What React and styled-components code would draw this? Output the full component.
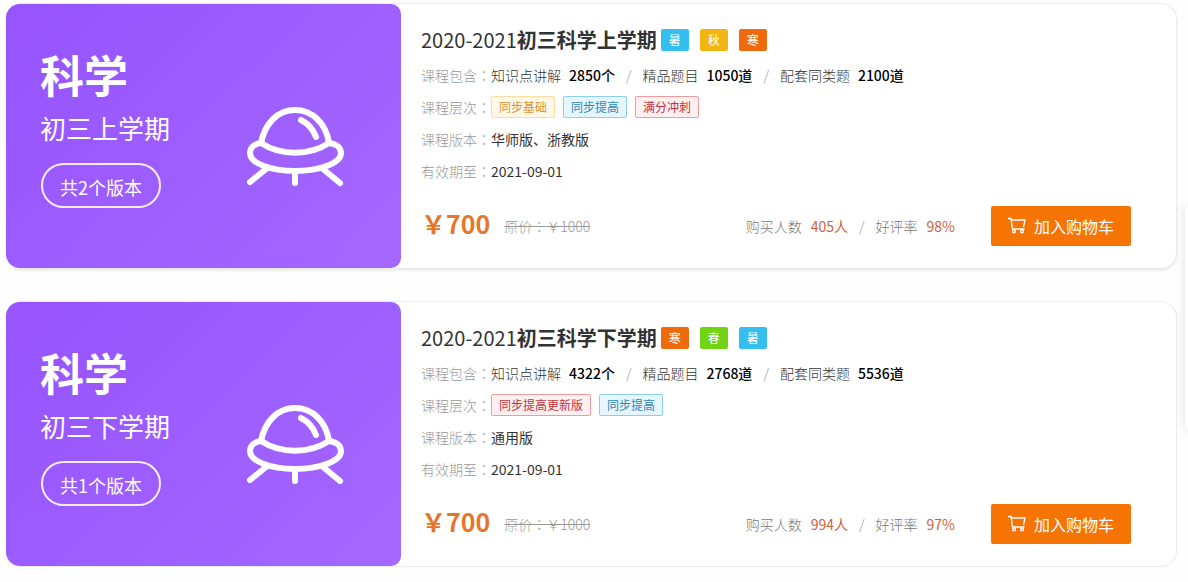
import React from 'react';
import styled, { createGlobalStyle } from 'styled-components';

const GlobalStyle = createGlobalStyle`
  * { box-sizing: border-box; }
  body {
    margin: 0;
    background: #fefefe;
    color: #333;
    font-family: 'Noto Sans CJK SC', 'Open Sans', sans-serif;
    font-size: 14px;
    overflow-x: hidden;
  }
  h2, h3, p, dl, dd, dt { margin: 0; }
`;

const CourseList = styled.main`
  display: flex;
  flex-direction: column;
  gap: 32px;
  padding: 3px 11px 15px 6px;
`;

const Card = styled.article`
  display: flex;
  background: #fff;
  border: 1px solid #ebebeb;
  border-left: 0;
  border-radius: 16px;
  box-shadow: ${p => (p.$raised ? '0 2px 3px rgba(0, 0, 0, 0.08)' : 'none')};
`;

const Cover = styled.section`
  display: flex;
  justify-content: space-between;
  align-items: flex-start;
  flex: 0 0 395px;
  padding: 40px 56px 60px 34px;
  border-radius: 14px 10px 10px 14px;
  background: linear-gradient(135deg, #9653ff, #a468ff);
  color: #fff;
`;

const Subject = styled.h2`
  font-size: 44px;
  line-height: 60px;
  font-weight: 700;
`;

const Term = styled.p`
  margin: 4px 0 15px;
  font-size: 26px;
  line-height: 40px;
  font-weight: 400;
`;

const Versions = styled.span`
  display: inline-flex;
  align-items: center;
  height: 45px;
  padding: 2px 17px 0;
  margin-left: 1px;
  border: 2px solid #f6ecff;
  border-radius: 23px;
  font-size: 18px;
  font-weight: 400;
`;

const Ufo = styled.svg`
  width: 98px;
  height: 82px;
  margin-top: 63px;
  fill: none;
  stroke: #fff;
  stroke-width: 6;
  stroke-linecap: round;
  stroke-linejoin: round;
`;

const Body = styled.section`
  flex: 1;
  min-width: 0;
  padding: 18px 45px 20px 20px;
`;

const Heading = styled.header`
  display: flex;
  align-items: center;
  height: 36px;
`;

const Title = styled.h3`
  margin-right: 4px;
  font-size: 20px;
  line-height: 36px;
  font-weight: 700;
`;

const Year = styled.span`
  font-weight: 400;
`;

const seasons = { 暑: '#35bfef', 秋: '#f1b614', 寒: '#ee6a0c', 春: '#70d313' };

const Season = styled.span`
  width: 28px;
  margin-right: 11px;
  border-radius: 2px;
  background: ${p => p.$color};
  color: #fff;
  font-size: 12px;
  line-height: 22px;
  text-align: center;
`;

const Details = styled.dl`
  margin-top: 1px;
`;

const Row = styled.div`
  display: flex;
  align-items: center;
  height: 32px;
  line-height: 32px;
`;

const Label = styled.dt`
  color: #999;
  font-weight: 300;
`;

const Colon = styled.span`
  font-family: 'Noto Sans CJK TC', sans-serif;
`;

const Value = styled.dd`
  display: flex;
  align-items: center;
  gap: ${p => p.$gap || 0}px;
`;

const Item = styled.span`
  color: ${p => p.$color};
  font-weight: 300;
`;

const Count = styled.strong`
  margin-left: ${p => p.$space}px;
  color: ${p => p.$color};
  font-weight: ${p => p.$weight};
`;

const Slash = styled.span`
  color: #999;
  font-weight: 300;
`;

const tones = {
  amber: ['#fff8e6', '#fbdca4', '#d99238'],
  blue: ['#e6f6ff', '#8ecdf0', '#2f86b8'],
  red: ['#fff0f0', '#ee9a9e', '#c5303f'],
};

const Tag = styled.span`
  padding: 0 7px;
  border: 1px solid ${p => tones[p.$tone][1]};
  border-radius: 2px;
  background: ${p => tones[p.$tone][0]};
  color: ${p => tones[p.$tone][2]};
  font-size: 12px;
  line-height: 20px;
`;

const Footer = styled.footer`
  display: flex;
  align-items: center;
  height: 40px;
  margin-top: 19px;
`;

const Price = styled.strong`
  margin-right: 14px;
  padding-bottom: 6px;
  color: #e6762b;
  font-size: 25px;
  line-height: 34px;
  font-weight: 700;
`;

const OldPrice = styled.del`
  color: #999;
  font-weight: 300;
`;

const Stats = styled.div`
  display: flex;
  gap: 11px;
  margin: 0 36px 0 auto;
`;

const CartButton = styled.button`
  display: flex;
  align-items: center;
  justify-content: center;
  gap: 8px;
  width: 140px;
  height: 40px;
  padding: 0;
  border: 0;
  border-radius: 2px;
  background: #f57403;
  color: #fff;
  font: 400 16px 'Noto Sans CJK SC', sans-serif;
  cursor: pointer;
`;

const CartSvg = styled.svg`
  width: 18px;
  height: 18px;
  fill: none;
  stroke: #fff;
  stroke-width: 1.3;
`;

const SideDock = styled.aside`
  position: fixed;
  top: 205px;
  right: -57px;
  width: 60px;
  height: 225px;
  border-radius: 6px;
  background: #fff;
  box-shadow: 0 0 12px rgba(0, 0, 0, 0.12);
`;

const UfoIcon = () => (
  <Ufo viewBox="0 0 98 82" aria-hidden="true">
    <path d="M14 36C18 16 31 3 48 3s31 13 34 33" />
    <path d="M14 36C7 37 3 41 3 46c0 10 20 18 45 18s46-8 46-18c0-5-4-9-12-10-20 13-48 13-68 0Z" />
    <path d="M54 13c8 4 12 9 15 17" />
    <path d="M19 62 3 75M48 64v12M76 62l17 14" />
  </Ufo>
);

const CartIcon = () => (
  <CartSvg viewBox="0 0 18 18" aria-hidden="true">
    <path d="M0 1.5h3l1.5 10.5h12M3.3 3h13.7l-1.5 7" />
    <circle cx="6" cy="14.5" r="1.4" />
    <circle cx="14" cy="14.5" r="1.4" />
  </CartSvg>
);

const courses = [
  {
    term: '初三上学期', name: '初三科学上学期', versions: 2, seasons: ['暑', '秋', '寒'],
    counts: ['2850个', '1050道', '2100道'],
    levels: [['同步基础', 'amber'], ['同步提高', 'blue'], ['满分冲刺', 'red']],
    edition: '华师版、浙教版', buyers: 405, rating: '98%', raised: true,
  },
  {
    term: '初三下学期', name: '初三科学下学期', versions: 1, seasons: ['寒', '春', '暑'],
    counts: ['4322个', '2768道', '5536道'],
    levels: [['同步提高更新版', 'red'], ['同步提高', 'blue']],
    edition: '通用版', buyers: 994, rating: '97%', raised: false,
  },
];

const contents = ['知识点讲解', '精品题目', '配套同类题'];

const Field = ({ label, gap, children }) => (
  <Row>
    <Label>{label}<Colon>：</Colon></Label>
    <Value $gap={gap}>{children}</Value>
  </Row>
);

const Course = ({ course }) => (
  <Card $raised={course.raised}>
    <Cover>
      <div>
        <Subject>科学</Subject>
        <Term>{course.term}</Term>
        <Versions>共{course.versions}个版本</Versions>
      </div>
      <UfoIcon />
    </Cover>
    <Body>
      <Heading>
        <Title><Year>2020-2021</Year>{course.name}</Title>
        {course.seasons.map(s => <Season key={s} $color={seasons[s]}>{s}</Season>)}
      </Heading>
      <Details>
        <Field label="课程包含" gap={11}>
          {contents.map((name, i) => (
            <React.Fragment key={name}>
              {i > 0 && <Slash>/</Slash>}
              <Item $color="#333">{name}<Count $space={8} $color="#000" $weight={500}>{course.counts[i]}</Count></Item>
            </React.Fragment>
          ))}
        </Field>
        <Field label="课程层次" gap={8}>
          {course.levels.map(([name, tone]) => <Tag key={name} $tone={tone}>{name}</Tag>)}
        </Field>
        <Field label="课程版本">{course.edition}</Field>
        <Field label="有效期至">2021-09-01</Field>
      </Details>
      <Footer>
        <Price>￥700</Price>
        <OldPrice>原价<Colon>：</Colon>￥1000</OldPrice>
        <Stats>
          <Item $color="#777">购买人数<Count $space={9} $color="#d0613a" $weight={400}>{course.buyers}人</Count></Item>
          <Slash>/</Slash>
          <Item $color="#777">好评率<Count $space={9} $color="#d0613a" $weight={400}>{course.rating}</Count></Item>
        </Stats>
        <CartButton type="button"><CartIcon />加入购物车</CartButton>
      </Footer>
    </Body>
  </Card>
);

export default function App() {
  return (
    <>
      <GlobalStyle />
      <CourseList>
        {courses.map(c => <Course key={c.name} course={c} />)}
      </CourseList>
      <SideDock />
    </>
  );
}
